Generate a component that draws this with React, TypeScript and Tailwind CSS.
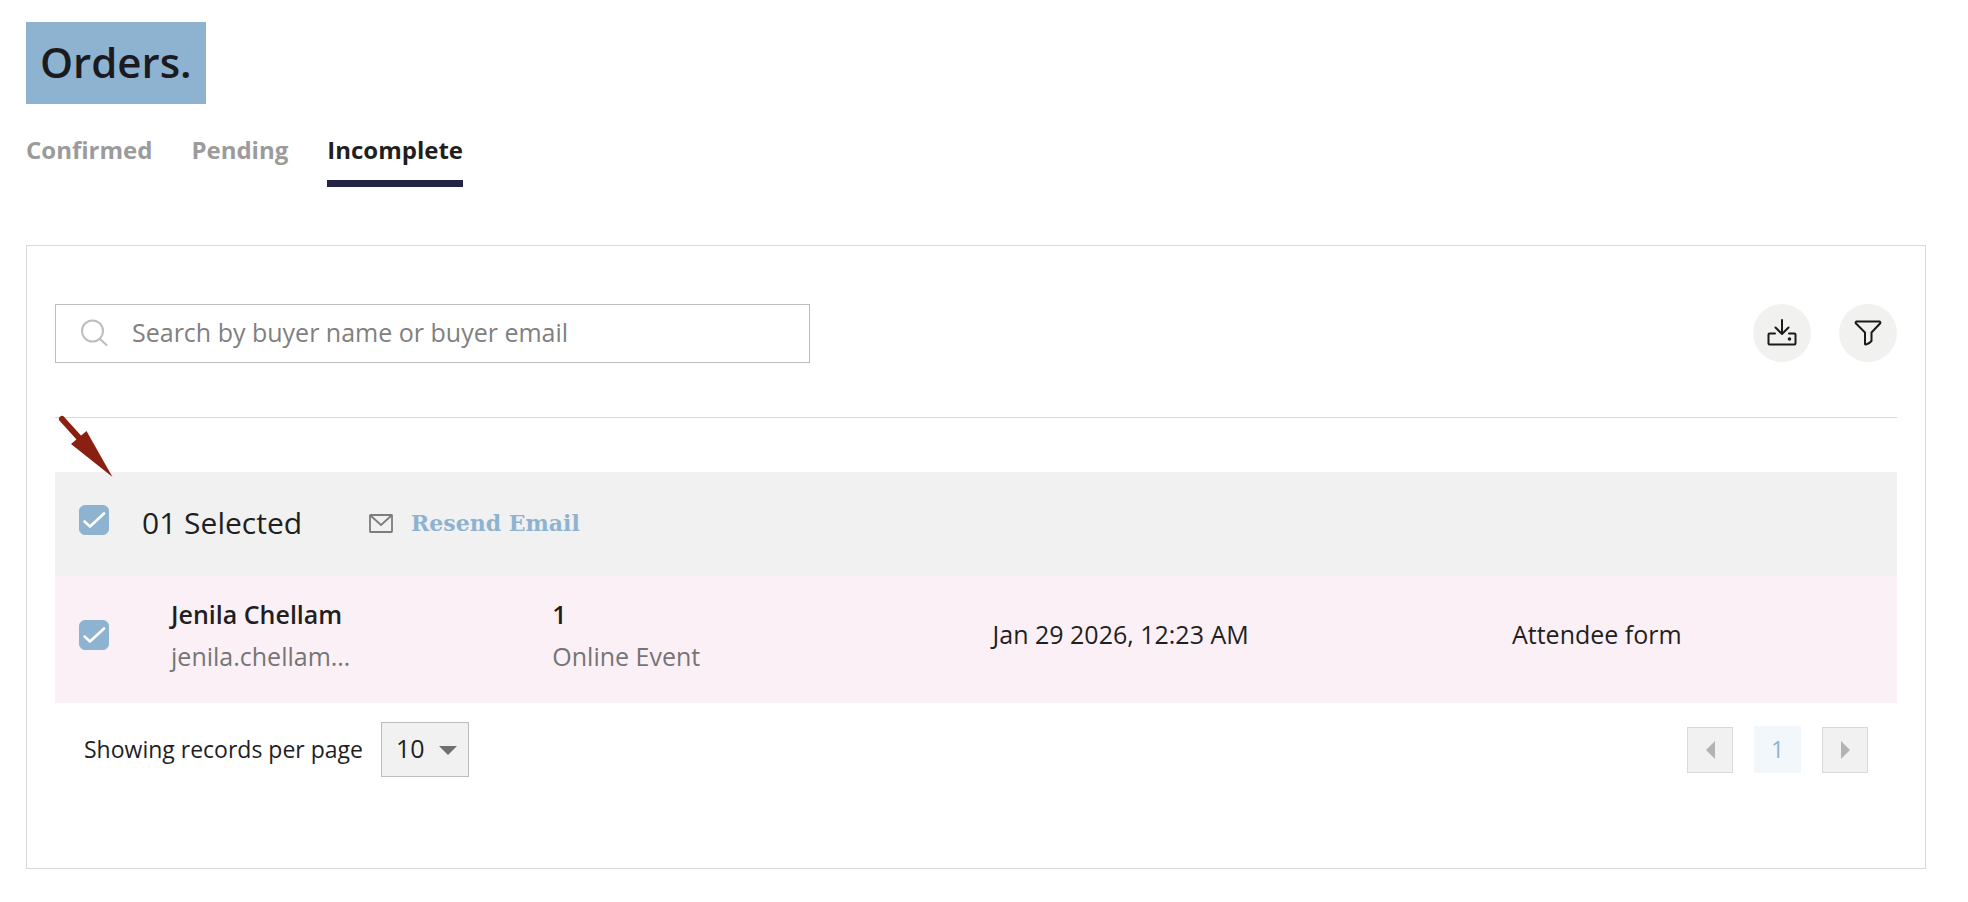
import { useState } from "react";

const tabs = ["Confirmed", "Pending", "Incomplete"];

const orders = [
  {
    name: "Jenila Chellam",
    email: "jenila.chellam…",
    quantity: "1",
    event: "Online Event",
    date: "Jan 29 2026, 12:23 AM",
    step: "Attendee form",
  },
];

function SearchIcon() {
  return (
    <svg width="28" height="28" viewBox="0 0 28 28" fill="none" stroke="#bdbdbd" strokeWidth="2" strokeLinecap="round">
      <circle cx="12.5" cy="12" r="10.5" />
      <path d="M20 20l6.500 6" />
    </svg>
  );
}

function DownloadIcon() {
  return (
    <svg width="30" height="28" viewBox="0 0 30 28" fill="none" stroke="#1b1b1b" strokeWidth="2" strokeLinecap="round" strokeLinejoin="round">
      <path d="M15 1v14M8.500 8.500l6.500 6.500 6.500-6.500" />
      <path d="M8 14.500H2.500q-1 0-1 1v9q0 1 1 1h25q1 0 1-1v-9q0-1-1-1H22" />
      <circle cx="22.500" cy="20" r="0.800" fill="#1b1b1b" />
    </svg>
  );
}

function FilterIcon() {
  return (
    <svg width="28" height="26" viewBox="0 0 28 26" fill="none" stroke="#1b1b1b" strokeWidth="2" strokeLinejoin="round">
      <path d="M2.500 1.500h23q1.500 0.800 0.500 2l-8.500 9v8.500q-2.500 3-5.500 3.500-1.200 0-1-1V12.500L2 3.500q-1-1.200 0.500-2z" />
    </svg>
  );
}

function MailIcon() {
  return (
    <svg width="24" height="19" viewBox="0 0 24 19" fill="none" stroke="#7d7d7d" strokeWidth="1.800" strokeLinejoin="round">
      <rect x="1" y="1" width="22" height="17" rx="0.500" />
      <path d="M1.500 1.500L12 11 22.500 1.500" />
    </svg>
  );
}

function Checkbox({ label, checked, onChange }: { label: string; checked: boolean; onChange: () => void }) {
  return (
    <span className="relative block size-[30px] shrink-0">
      <input
        type="checkbox"
        aria-label={label}
        checked={checked}
        onChange={onChange}
        className="block size-full appearance-none rounded-md border border-[#8eb3d1] bg-white checked:bg-[#8eb3d1]"
      />
      {checked && (
        <svg
          viewBox="0 0 30 30"
          className="pointer-events-none absolute inset-0 size-full"
          fill="none"
          stroke="#fff"
          strokeWidth="2.600"
          strokeLinecap="round"
          strokeLinejoin="round"
        >
          <path d="M5.500 16.500l5.500 5L25 8.500" />
        </svg>
      )}
    </span>
  );
}

export default function App() {
  const [active, setActive] = useState("Incomplete");
  const [checked, setChecked] = useState(true);
  const toggle = () => setChecked(!checked);

  return (
    <main className="bg-white pt-[22px] pr-[42px] pb-8 pl-[26px] font-['Open_Sans',sans-serif] text-[25px] text-[#1f1f1f]">
      <h1 className="inline-flex h-[82px] items-center bg-[#8eb3d1] px-[14px] pb-1 text-[42px] font-semibold text-[#1a1a1f]">
        Orders.
      </h1>

      <nav className="mt-7 flex gap-[39px]">
        {tabs.map((tab) => (
          <button
            key={tab}
            type="button"
            onClick={() => setActive(tab)}
            className={`border-b-[7px] pb-3 text-2xl leading-9 font-bold ${
              active === tab ? "border-[#252344] text-[#1f1f1f]" : "border-transparent text-[#9b9b9b]"
            }`}
          >
            {tab}
          </button>
        ))}
      </nav>

      <section className="mt-[58px] border border-[#d9d9d9] px-7 pt-[58px] pb-[91px]">
        <div className="flex items-start justify-between">
          <label className="flex h-[59px] w-[41%] items-center gap-6 border border-[#bdbdbd] pb-0.5 pl-6">
            <SearchIcon />
            <input
              type="text"
              aria-label="Search orders"
              placeholder="Search by buyer name or buyer email"
              className="min-w-0 flex-1 bg-transparent outline-none placeholder:text-[#808080]"
            />
          </label>
          <div className="flex gap-7">
            <button type="button" aria-label="Download" className="flex size-[58px] items-center justify-center rounded-full bg-[#f1f1f0]">
              <DownloadIcon />
            </button>
            <button type="button" aria-label="Filter" className="flex size-[58px] items-center justify-center rounded-full bg-[#f1f1f0]">
              <FilterIcon />
            </button>
          </div>
        </div>

        <div className="relative mt-[54px] border-t border-[#d9d9d9] pt-[54px]">
          {/* pointer to the select-all box */}
          <svg width="60" height="66" viewBox="0 0 60 66" className="absolute -top-1 left-0" fill="#8a2012">
            <path d="M7 5l19 21" stroke="#8a2012" strokeWidth="6" strokeLinecap="round" />
            <path d="M16 30L31.500 17 57.500 63z" />
          </svg>

          <table className="w-full table-fixed text-left">
            <colgroup>
              <col className="w-[6.300%]" />
              <col className="w-[20.700%]" />
              <col className="w-[23.900%]" />
              <col className="w-[28.200%]" />
              <col />
            </colgroup>
            <thead>
              <tr className="bg-[#f1f1f1]">
                <th colSpan={5} className="h-[104px] px-6 pb-0.5 font-normal">
                  <div className="flex items-center">
                    <div className="pb-1.5">
                      <Checkbox label="Select all orders" checked={checked} onChange={toggle} />
                    </div>
                    <span className="ml-[33px] text-3xl">01 Selected</span>
                    <button
                      type="button"
                      className="ml-[67px] flex items-center gap-[18px] font-['DejaVu_Serif',serif] text-[22px] font-bold text-[#8eb3d1]"
                    >
                      <MailIcon />
                      Resend Email
                    </button>
                  </div>
                </th>
              </tr>
            </thead>
            <tbody>
              {orders.map((order) => (
                <tr key={order.email} className="bg-[#fcf0f7]">
                  <td className="h-[127px] pb-2.5 pl-6">
                    <Checkbox label={`Select ${order.name}`} checked={checked} onChange={toggle} />
                  </td>
                  <td className="pb-2.5 leading-[42px]">
                    <div className="font-semibold">{order.name}</div>
                    <div className="text-[#757575]">{order.email}</div>
                  </td>
                  <td className="pb-2.5 leading-[42px]">
                    <div className="font-semibold">{order.quantity}</div>
                    <div className="text-[#757575]">{order.event}</div>
                  </td>
                  <td className="pb-2.5">{order.date}</td>
                  <td className="pb-2.5">{order.step}</td>
                </tr>
              ))}
            </tbody>
          </table>
        </div>

        <footer className="mt-[19px] flex items-center justify-between px-[29px]">
          <div className="flex items-center gap-[18px]">
            <label htmlFor="page-size" className="text-[23px]">
              Showing records per page
            </label>
            <div className="relative">
              <select
                id="page-size"
                defaultValue="10"
                className="block h-[55px] w-[88px] appearance-none border border-[#bdbdbd] bg-[#f1f1f1] pb-0.5 pl-[14px] text-[25px]"
              >
                <option>10</option>
                <option>25</option>
                <option>50</option>
              </select>
              <svg width="18" height="9" className="pointer-events-none absolute top-6 right-3" fill="#707070">
                <path d="M0 0h18l-9 9z" />
              </svg>
            </div>
          </div>
          <div className="flex items-center gap-[21px]">
            <button type="button" aria-label="Previous page" className="flex size-[46px] items-center justify-center border border-[#d9d9d9] bg-[#f1f1f1]">
              <svg width="9" height="18" fill="#b3b3b3">
                <path d="M9 0v18L0 9z" />
              </svg>
            </button>
            <button type="button" aria-current="page" className="size-[47px] bg-[#f2f7fb] text-[23px] text-[#8eb3d1]">
              1
            </button>
            <button type="button" aria-label="Next page" className="flex size-[46px] items-center justify-center border border-[#d9d9d9] bg-[#f1f1f1]">
              <svg width="9" height="18" fill="#b3b3b3">
                <path d="M0 0v18l9-9z" />
              </svg>
            </button>
          </div>
        </footer>
      </section>
    </main>
  );
}
